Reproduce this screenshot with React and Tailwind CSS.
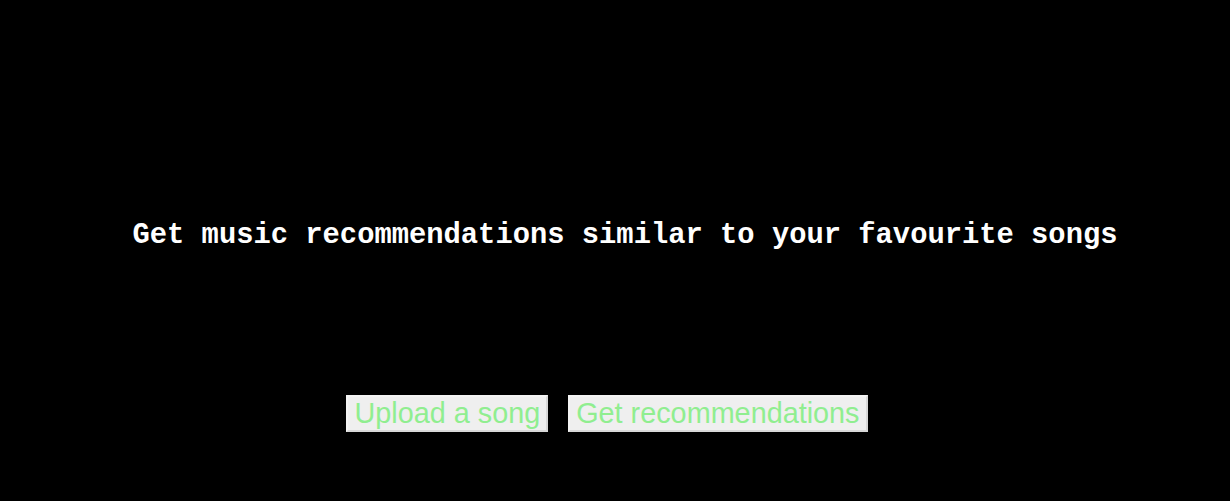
import React from "react";

const App = () => {
  return (
    <div className="h-[501px] w-full bg-black overflow-hidden">
      {/* ================= HEADING ================= */}
      <div className="flex justify-center pl-[20px] pt-[219px]">
        <h1 className="text-[28.8px] leading-[33px] font-bold text-white font-['Liberation_Mono',monospace]">
          Get music recommendations similar to your favourite songs
        </h1>
      </div>

      {/* ================= ACTIONS ================= */}
      <div className="flex justify-center gap-[20px] pr-[16px] pt-[143px]">
        <button className="bg-[#efefef] border-2 border-t-[#f4f4f4] border-l-[#f4f4f4] border-r-[#d8d8d8] border-b-[#d8d8d8] px-[6px] py-0 text-[28.8px] leading-[33px] text-[#90ee90] font-['Liberation_Sans',Arial,sans-serif]">
          Upload a song
        </button>
        <button className="bg-[#efefef] border-2 border-t-[#f4f4f4] border-l-[#f4f4f4] border-r-[#d8d8d8] border-b-[#d8d8d8] px-[6px] py-0 text-[28.8px] leading-[33px] text-[#90ee90] font-['Liberation_Sans',Arial,sans-serif]">
          Get recommendations
        </button>
      </div>
    </div>
  );
};

export default App;
